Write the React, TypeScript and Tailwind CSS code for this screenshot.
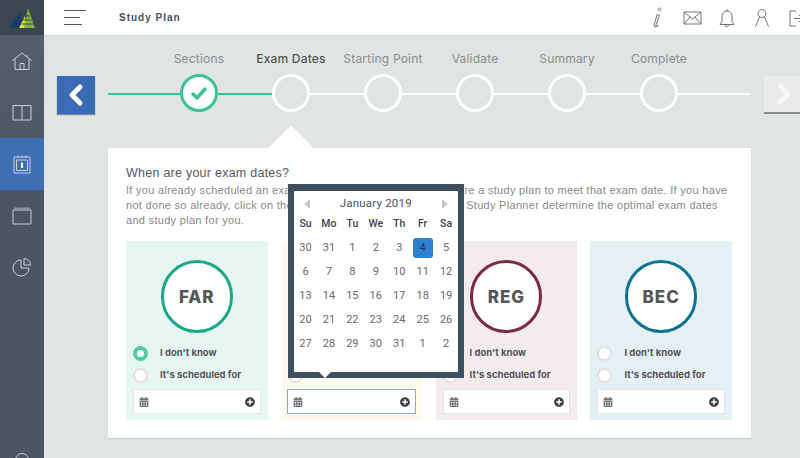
import React from 'react'
import { FaCalendarAlt, FaPlusCircle } from 'react-icons/fa'

const steps = ['Sections', 'Exam Dates', 'Starting Point', 'Validate', 'Summary', 'Complete']

const days = [
  30, 31, 1, 2, 3, 4, 5,
  6, 7, 8, 9, 10, 11, 12,
  13, 14, 15, 16, 17, 18, 19,
  20, 21, 22, 23, 24, 25, 26,
  27, 28, 29, 30, 31, 1, 2,
]

const Logo = () => (
  <svg width="28" height="22" viewBox="0 0 28 22">
    <path d="M1 21 L12 5 L15 21 Z" fill="#1b3a6a" />
    <path d="M11 21 L17 9 L19 21 Z" fill="#e3dc2a" />
    <path d="M16 21 L20 1 L27 21 Z" fill="#7fb23c" />
    <path d="M14 17 H26 M15 13 H24 M17 9 H22" stroke="#3a4650" strokeWidth="1" />
  </svg>
)

const SideIcon = ({ children }: { children: React.ReactNode }) => (
  <svg width="22" height="22" viewBox="0 0 22 22" fill="none" stroke="#c9d0d6" strokeWidth="1">
    {children}
  </svg>
)

const navIcons = [
  <SideIcon>
    <path d="M1.5 10.5 L11 3 L20.5 10.5 M4 9 V19.5 H18 V9 M9 19.5 V13.5 H13 V19.5 M16 5 V7" />
  </SideIcon>,
  <SideIcon>
    <path d="M2 4.5 H20 V19 H2 Z M11 4.5 V19" />
  </SideIcon>,
  <SideIcon>
    <path d="M3 4 H19 V20 H3 Z M5.5 7 H16.5 V17.5 H5.5 Z M7 2.5 V5 M11 2.5 V5 M15 2.5 V5" />
    <path d="M10 9.5 H12 V15 H10 Z" fill="#fff" stroke="none" />
  </SideIcon>,
  <SideIcon>
    <path d="M2 6 H20 V20 H2 Z" />
    <path d="M3 3.5 H19 V6 H3 Z" fill="#8b959e" stroke="none" />
  </SideIcon>,
  <SideIcon>
    <path d="M10 4 A8 8 0 1 0 18 12 H10 Z M13 2.5 A6.5 6.5 0 0 1 19.5 9 H13 Z" />
  </SideIcon>,
]

const TopIcon = ({ children, w = 22 }: { children: React.ReactNode; w?: number }) => (
  <svg width={w} height="22" viewBox={`0 0 ${w} 22`} fill="none" stroke="#70757a" strokeWidth="1">
    {children}
  </svg>
)

const Radio = ({ on }: { on?: boolean }) => (
  <span
    className={
      on
        ? 'h-[15px] w-[15px] shrink-0 rounded-full border-[4px] border-[#4fcba6] bg-white'
        : 'h-[15px] w-[15px] shrink-0 rounded-full border-2 border-[#e3e0e2] bg-white'
    }
  />
)

const Popover = () => (
  <div className="absolute left-[7px] top-[-57px] z-10 h-[194px] w-[176px] border-x-[6px] border-b-[6px] border-t-[7px] border-[#3f4f5e] bg-white pt-[1px] font-['Roboto',sans-serif]">
    <div className="flex h-[24px] items-center justify-between px-[10px] text-[11.5px] tracking-[0.2px] text-[#4a5560]">
      <span className="h-0 w-0 border-y-[5px] border-r-[6px] border-y-transparent border-r-[#c4c8cc]" />
      January 2019
      <span className="h-0 w-0 border-y-[5px] border-l-[6px] border-y-transparent border-l-[#c4c8cc]" />
    </div>
    <div className="mb-[4px] grid h-[16px] grid-cols-7 items-center text-center text-[10.5px] font-medium text-[#3c444c]">
      {['Su', 'Mo', 'Tu', 'We', 'Th', 'Fr', 'Sa'].map((d) => (
        <span key={d}>{d}</span>
      ))}
    </div>
    <div className="grid grid-cols-7 text-[11px] text-[#66696c]">
      {days.map((d, i) => (
        <div key={i} className="flex h-[24px] items-center justify-center">
          {i === 5 ? (
            <span className="flex h-[20px] w-[20px] items-center justify-center rounded-[3px] bg-[#2d82cf] text-[#1f3550]">{d}</span>
          ) : (
            d
          )}
        </div>
      ))}
    </div>
    <span className="absolute bottom-[-6px] left-[25px] h-0 w-0 border-x-[6px] border-t-[6px] border-x-transparent border-t-white" />
  </div>
)

const sections = [
  { code: 'FAR', bg: 'bg-[#e6f7f3]', ring: 'border-[#1aa888]', selected: true },
  { code: 'AUD', bg: 'bg-[#fef9ec]', ring: 'border-[#e0b050]', focus: true, open: true },
  { code: 'REG', bg: 'bg-[#f4ebed]', ring: 'border-[#7a2b42]' },
  { code: 'BEC', bg: 'bg-[#e5f0f4]', ring: 'border-[#0f7290]' },
]

const SectionCard = ({ code, bg, ring, selected, focus, open }: any) => (
  <div className={`relative h-[179px] w-[141.5px] shrink-0 ${bg}`}>
    {open && <Popover />}
    <div className={`mx-auto mt-[19px] flex h-[73px] w-[72px] items-center justify-center rounded-full border-[3px] bg-white pt-[2px] font-['Inter',sans-serif] text-[17px] font-extrabold tracking-[1px] text-[#555658] ${ring}`}>
      {code}
    </div>
    <div className="mt-[13px] flex flex-col gap-[7px] px-[7px] font-['Inter',sans-serif] text-[9.5px] font-bold text-[#54565a]">
      <div className="flex items-center gap-[12px]">
        <Radio on={selected} />
        <span>I don't know</span>
      </div>
      <div className="flex items-center gap-[12px]">
        <Radio />
        <span>It's scheduled for</span>
      </div>
    </div>
    <div
      className={
        focus
          ? 'mx-[6px] mt-[6px] flex h-[25px] items-center justify-between border border-[#86a8e6] bg-white px-[5px]'
          : 'mx-[7px] mt-[6px] flex h-[25px] items-center justify-between border border-[#e6e4e4] bg-white px-[5px]'
      }
    >
      <FaCalendarAlt className="text-[10px] text-[#70757a]" />
      <FaPlusCircle className="text-[10px] text-[#3a3e42]" />
    </div>
  </div>
)

const App = () => {
  return (
    <div className="flex h-[458px] w-[800px] overflow-hidden bg-[#e0e4e3] font-['Liberation_Sans',sans-serif]">
      <aside className="flex w-[44px] shrink-0 flex-col overflow-hidden bg-linear-to-b from-[#56636f] to-[#4a5763] to-[40%]">
        <div className="flex h-[35px] shrink-0 items-center justify-center bg-[#3a4650]">
          <Logo />
        </div>
        {navIcons.map((icon, i) => (
          <div
            key={i}
            className={
              i === 2
                ? 'flex h-[51.5px] shrink-0 items-center justify-center bg-[#3d6fb5]'
                : 'flex h-[51.5px] shrink-0 items-center justify-center'
            }
          >
            {icon}
          </div>
        ))}
        <div className="mt-auto mb-[-9px] flex justify-center">
          <span className="h-[14px] w-[14px] rounded-full border border-[#c9d0d6]" />
        </div>
      </aside>

      <div className="flex min-w-0 flex-1 flex-col">
        <header className="flex h-[36px] shrink-0 items-center border-b border-[#cfd3d3] bg-white">
          <div className="ml-[20px] flex w-[22px] flex-col gap-[5.5px]">
            <span className="h-[1.5px] w-[22px] bg-[#55585c]" />
            <span className="h-[1.5px] w-[16px] bg-[#55585c]" />
            <span className="h-[1.5px] w-[18px] bg-[#55585c]" />
          </div>
          <span className="ml-[33px] text-[10px] font-bold tracking-[1px] text-[#4a4f58]">Study Plan</span>
          <div className="ml-auto mr-[-6px] flex items-center gap-[13px]">
            <TopIcon>
              <path d="M13.5 4 a1.5 1.5 0 1 1 0.1 0 M10 8 H13.5 L10 18 Q9.5 20 11 19.5 L13 18 M11 8.5 L8 18 Q8 20.5 10 20" />
            </TopIcon>
            <TopIcon>
              <path d="M3 5 H20 V17 H3 Z M3 5 L11.5 12 L20 5 M3 17 L9 10 M20 17 L14 10" />
            </TopIcon>
            <TopIcon>
              <path d="M4 17.5 H18 L16 14.5 V9 A5 5 0 0 0 6 9 V14.5 Z M9 17.5 A2 2 0 0 0 13 17.5 M10 4 A1 1 0 0 1 12 4" />
            </TopIcon>
            <TopIcon>
              <path d="M11 2.5 A4 4 0 1 1 10.9 2.5 M8.5 10 L4.5 19.5 M13.5 10 L17.5 19.5" />
            </TopIcon>
            <TopIcon w={20}>
              <path d="M10 4 H4 V19 H10 M8 11.5 H18 M13 8 L17 11.5 L13 15" />
            </TopIcon>
          </div>
        </header>

        <div className="flex shrink-0 items-start pt-[15px]">
          <button className="ml-[13px] mt-[25px] flex h-[38px] w-[38px] shrink-0 items-center justify-center bg-[#3a6bb3] shadow-[0_1px_1px_#7a8590]">
            <svg width="18" height="24" viewBox="0 0 18 24" fill="none" stroke="#fff" strokeWidth="5" strokeLinecap="round" strokeLinejoin="round">
              <path d="M13 4 L5 12 L13 20" />
            </svg>
          </button>
          <div className="relative ml-[13px] flex w-[643px] shrink-0 pl-[45px] font-['Inter',sans-serif]">
            <div className="absolute left-[0px] top-[42px] h-[2px] w-full bg-white" />
            <div className="absolute left-[0px] top-[42px] h-[2px] w-[164px] bg-[#3cc29a]" />
            {steps.map((s, i) => (
              <div key={s} className="relative flex w-[92px] shrink-0 flex-col items-center gap-[7px]">
                <span
                  className={
                    i === 1
                      ? 'h-[16px] whitespace-nowrap text-[12px] leading-[16px] font-medium tracking-[0.2px] text-[#50565b]'
                      : 'h-[16px] whitespace-nowrap text-[12px] leading-[16px] tracking-[0.2px] text-[#8a8f92]'
                  }
                >
                  {s}
                </span>
                {i === 0 ? (
                  <span className="flex h-[38px] w-[38px] items-center justify-center rounded-full border-[3px] border-[#3cc29a] bg-white">
                    <svg width="18" height="15" viewBox="0 0 18 15" fill="none" stroke="#3cc29a" strokeWidth="3.5" strokeLinecap="round" strokeLinejoin="round">
                      <path d="M3 8 L7 12 L15 3" />
                    </svg>
                  </span>
                ) : (
                  <span className="h-[38px] w-[38px] rounded-full border-[3px] border-white bg-[#e0e4e3]" />
                )}
              </div>
            ))}
          </div>
          <button className="ml-[13px] mt-[25px] flex h-[38px] w-[40px] shrink-0 items-center justify-center border-b-2 border-[#8a8e90] bg-[#eaecec]">
            <svg width="18" height="24" viewBox="0 0 18 24" fill="none" stroke="#f8f8f8" strokeWidth="5" strokeLinecap="round" strokeLinejoin="round">
              <path d="M5 4 L13 12 L5 20" />
            </svg>
          </button>
        </div>

        <section className="relative ml-[64px] mt-[34px] h-[290px] w-[643px] shrink-0 bg-white pl-[18px] pr-[19px] pt-[17px] shadow-[0_1px_1px_#c8cdcc]">
          <span className="absolute left-[167px] top-[-16px] h-[32px] w-[32px] rotate-45 bg-white" />
          <h2 className="relative h-[16px] text-[12.5px] leading-[16px] tracking-[0.25px] text-[#55585c]">When are your exam dates?</h2>
          <p className="mt-[2px] whitespace-nowrap text-[11px] leading-[15px] tracking-[0.3px] text-[#85888c]">
            If you already scheduled an exam date, enter it and we can prepare a study plan to meet that exam date. If you have
            <br />
            not done so already, click on the "I don't know" option to have the Study Planner determine the optimal exam dates
            <br />
            and study plan for you.
          </p>
          <div className="mt-[13px] flex gap-[13.3px]">
            {sections.map((s) => (
              <SectionCard key={s.code} {...s} />
            ))}
          </div>
        </section>
      </div>
    </div>
  )
}

export default App
